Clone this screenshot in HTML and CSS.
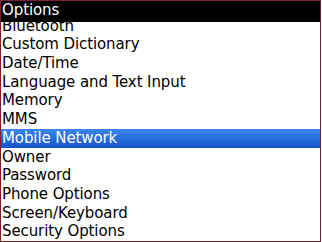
FILE: index.html
```html
<!DOCTYPE html>
<html>
<head>
<meta charset="utf-8">
<link rel="stylesheet" href="styles.css">
</head>
<body>
<div class="screen">
  <div class="title">Options</div>
  <div class="viewport">
    <ul class="list">
      <li class="item">Bluetooth</li>
      <li class="item">Custom Dictionary</li>
      <li class="item">Date/Time</li>
      <li class="item">Language and Text Input</li>
      <li class="item">Memory</li>
      <li class="item">MMS</li>
      <li class="item selected">Mobile Network</li>
      <li class="item">Owner</li>
      <li class="item">Password</li>
      <li class="item">Phone Options</li>
      <li class="item">Screen/Keyboard</li>
      <li class="item">Security Options</li>
    </ul>
  </div>
</div>
</body>
</html>
```
FILE: styles.css
```css
html, body {
  margin: 0;
  padding: 0;
  background: #ffffff;
}
.screen {
  width: 321px;
  height: 242px;
  box-sizing: border-box;
  border: 1px solid #7d1f2d;
  display: flex;
  flex-direction: column;
  overflow: hidden;
  font-family: "DejaVu Sans", sans-serif;
  font-size: 15px;
  letter-spacing: -0.1px;
  background: #ffffff;
}
.title {
  height: 21px;
  line-height: 19px;
  flex: none;
  background: #000000;
  color: #ffffff;
  padding-left: 1px;
}
.viewport {
  flex: 1;
  overflow: hidden;
}
.list {
  list-style: none;
  margin: -5.3px 0 0 0;
  padding: 0;
}
.item {
  height: 18.7px;
  line-height: 18.7px;
  padding-left: 1px;
  color: #000000;
  white-space: nowrap;
}
.item.selected {
  color: #ffffff;
  background: linear-gradient(#3a88f2, #1552c8);
}
```
